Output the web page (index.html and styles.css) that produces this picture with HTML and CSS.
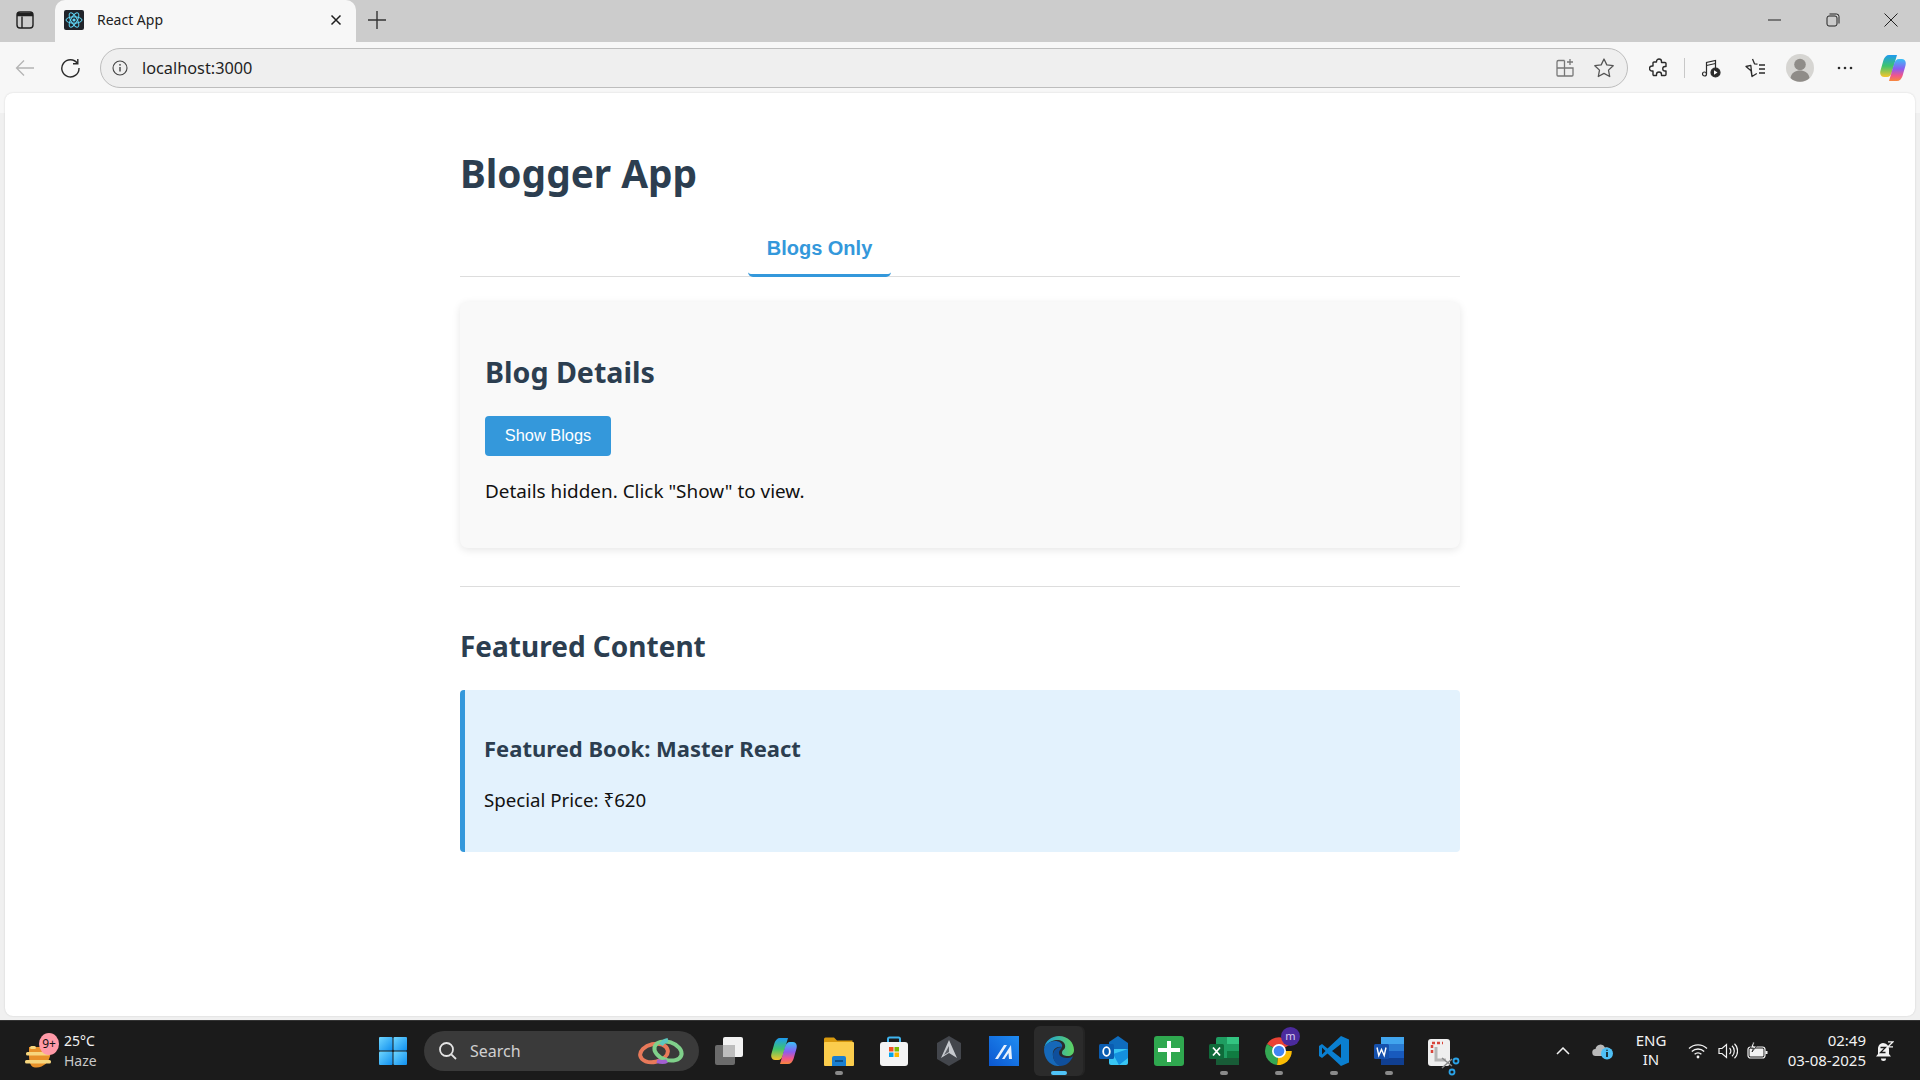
FILE: index.html
```html
<!DOCTYPE html>
<html lang="en">

<head>
    <meta charset="UTF-8">
    <meta name="viewport" content="width=device-width, initial-scale=1.0">
    <title>React App</title>
    <link rel="stylesheet" href="styles.css">
</head>

<body>
    <div class="window">
        <!-- tab strip -->
        <div class="tabstrip">
            <div class="strip-btn">
                <svg width="20" height="20" viewBox="0 0 20 20" fill="none" stroke="#1f1f1f" stroke-width="1.4"><rect x="2" y="2" width="16" height="16" rx="3"/><path d="M2 4.500h16" stroke-width="3.500"/><path d="M7 6.500V18"/></svg>
            </div>
            <div class="tab">
                <svg class="favicon" width="20" height="20" viewBox="0 0 20 20" fill="none" stroke="#61dafb" stroke-width="1"><rect width="20" height="20" rx="2" fill="#20232a" stroke="none"/><ellipse cx="10" cy="10" rx="8" ry="3.2"/><ellipse cx="10" cy="10" rx="8" ry="3.2" transform="rotate(60 10 10)"/><ellipse cx="10" cy="10" rx="8" ry="3.2" transform="rotate(120 10 10)"/><circle cx="10" cy="10" r="1.6" fill="#61dafb" stroke="none"/></svg>
                <span class="tab-title">React App</span>
                <svg class="tab-close" width="12" height="12" viewBox="0 0 12 12" stroke="#1f1f1f" stroke-width="1.5"><path d="M1.500 1.500l9 9M10.500 1.500l-9 9"/></svg>
            </div>
            <svg class="new-tab" width="18" height="18" viewBox="0 0 18 18" stroke="#333" stroke-width="1.4"><path d="M9 0v18M0 9h18"/></svg>
            <div class="win-controls">
                <svg width="14" height="14" viewBox="0 0 14 14" stroke="#222" stroke-width="1"><path d="M0 7h13"/></svg>
                <svg width="14" height="14" viewBox="0 0 14 14" fill="none" stroke="#222" stroke-width="1"><rect x="1" y="3" width="10" height="10" rx="2"/><path d="M3.500 1h7a2.500 2.500 0 0 1 2.500 2.500v7"/></svg>
                <svg width="14" height="14" viewBox="0 0 14 14" stroke="#222" stroke-width="1"><path d="M.5.500l13 13M13.500.500l-13 13"/></svg>
            </div>
        </div>

        <!-- address bar -->
        <div class="toolbar">
            <div class="tool tool-back">
                <svg width="20" height="18" viewBox="0 0 20 18" fill="none" stroke="#b4b4b4" stroke-width="1.3"><path d="M19 9H1.500M9 1.500L1.500 9 9 16.500"/></svg>
            </div>
            <div class="tool">
                <svg width="20" height="20" viewBox="0 0 20 20" fill="none" stroke="#2b2b2b" stroke-width="1.400"><path d="M17.500 5.500A8.600 8.600 0 1 0 19 10"/><path d="M17.800 1v4.800H13"/></svg>
            </div>
            <div class="addressbar">
                <svg class="info" width="16" height="16" viewBox="0 0 16 16" fill="none" stroke="#444" stroke-width="1.100"><circle cx="8" cy="8" r="7"/><path d="M8 7v4.500" stroke-width="1.400"/><circle cx="8" cy="4.800" r=".9" fill="#444" stroke="none"/></svg>
                <span class="url">localhost:3000</span>
                <div class="address-icons">
                    <svg width="20" height="20" viewBox="0 0 20 20" fill="none" stroke="#777" stroke-width="1.300"><path d="M9.500 2.500H3.500a1.500 1.500 0 0 0-1.500 1.500v13a1 1 0 0 0 1 1H17a1 1 0 0 0 1-1V10H2M9.500 2.500V18"/><path d="M15 1v6M12 4h6"/></svg>
                    <svg width="22" height="22" viewBox="0 0 22 22" fill="none" stroke="#555" stroke-width="1.300" stroke-linejoin="round"><path d="M11 2l2.800 5.900 6.400.8-4.700 4.400 1.200 6.400L11 16.400l-5.700 3.100 1.200-6.400L1.800 8.700l6.400-.8z"/></svg>
                </div>
            </div>
            <div class="tool">
                <svg width="20" height="20" viewBox="0 0 20 20" fill="none" stroke="#2b2b2b" stroke-width="1.400" stroke-linejoin="round"><path d="M7.500 3.500a2.500 2.500 0 0 1 5 0v1h3.500a1 1 0 0 1 1 1v3h-1a2.200 2.200 0 0 0 0 4.500h1v3.500a1 1 0 0 1-1 1h-3.500v-1a2.500 2.500 0 0 0-5 0v1H5a1 1 0 0 1-1-1v-3.500H3a2.500 2.500 0 0 1 0-5h1v-3a1 1 0 0 1 1-1h2.500z"/></svg>
            </div>
            <div class="tool-sep"></div>
            <div class="tool">
                <svg width="20" height="20" viewBox="0 0 20 20" fill="none" stroke="#2b2b2b" stroke-width="1.200"><path d="M5.500 16V4.500L14.500 2.500V10"/><path d="M5.500 7.500l9-2"/><circle cx="3.500" cy="16" r="2"/><circle cx="14.500" cy="14.500" r="4.500" fill="#2b2b2b"/><path d="M13 12.300v4.400l3.500-2.200z" fill="#fff" stroke="none"/></svg>
            </div>
            <div class="tool">
                <svg width="22" height="22" viewBox="0 0 22 22" fill="none" stroke="#2b2b2b" stroke-width="1.300" stroke-linejoin="round"><path d="M8.500 2l2 4.800 3 .3M8 19.500l-1-5.800L2 9.500l4.800-1.200zM8 19.500l4.800-3"/><path d="M15 8h6M15 12h6M15 16h6"/></svg>
            </div>
            <div class="tool tool-avatar">
                <svg width="28" height="28" viewBox="0 0 28 28"><circle cx="14" cy="14" r="14" fill="#d6d5d2"/><circle cx="14" cy="10.500" r="5.800" fill="#8f8c88"/><path d="M4.500 24c1-5.500 5-7.500 9.500-7.500s8.500 2 9.500 7.500a14 14 0 0 1-19 0z" fill="#8f8c88"/></svg>
            </div>
            <div class="tool">
                <svg width="16" height="4" viewBox="0 0 16 4" fill="#2b2b2b"><circle cx="2" cy="2" r="1.300"/><circle cx="8" cy="2" r="1.300"/><circle cx="14" cy="2" r="1.300"/></svg>
            </div>
            <div class="tool tool-copilot">
                <svg width="28" height="28" viewBox="0 0 28 28"><defs><linearGradient id="cpA" x1="0" y1="0" x2="0" y2="1"><stop offset="0" stop-color="#1e9af0"/><stop offset=".5" stop-color="#3ec46d"/><stop offset="1" stop-color="#f7c52b"/></linearGradient><linearGradient id="cpB" x1="0" y1="0" x2="0" y2="1"><stop offset="0" stop-color="#39c0f7"/><stop offset=".45" stop-color="#8b5cf0"/><stop offset=".75" stop-color="#f0568c"/><stop offset="1" stop-color="#f7883b"/></linearGradient></defs><path d="M10 1h8l-5 17c-.8 3-2.500 5-5 5H5C2 23 .5 20 1.500 16.500L4.500 6C5.500 3 7.500 1 10 1z" fill="url(#cpA)"/><path d="M18 27h-8l5-17c.8-3 2.500-5 5-5h3c3 0 4.500 3 3.500 6.500L23.500 22c-1 3-3 5-5.500 5z" fill="url(#cpB)"/></svg>
            </div>
        </div>

        <!-- page -->
        <div class="viewport">
            <div class="page">
                <div class="app">
                    <h1>Blogger App</h1>
                    <div class="tabs">
                        <button class="tab-link active">Blogs Only</button>
                    </div>

                    <div class="card">
                        <h2>Blog Details</h2>
                        <button class="show-btn">Show Blogs</button>
                        <p>Details hidden. Click "Show" to view.</p>
                    </div>

                    <hr class="divider">

                    <h2 class="featured-title">Featured Content</h2>
                    <div class="featured">
                        <h3>Featured Book: Master React</h3>
                        <p>Special Price: ₹620</p>
                    </div>
                </div>
            </div>
        </div>

        <!-- taskbar -->
        <div class="taskbar">
            <div class="weather">
                <div class="weather-icon">
                    <svg width="34" height="36" viewBox="0 0 34 36"><path d="M8 34a13 13 0 0 0 15-6c3-5 3-10 1-14H4v8c0 6 1 10 4 12z" fill="#e8912a"/><rect x="1" y="19" width="24" height="3.500" rx="1.500" fill="#f7d67e"/><rect x="0" y="27" width="26" height="3.500" rx="1.500" fill="#f7d67e"/><rect x="5" y="13" width="6" height="3" rx="1.500" fill="#f7d67e"/></svg>
                    <span class="badge">9+</span>
                </div>
                <div class="weather-text">
                    <span>25°C</span>
                    <span class="dim">Haze</span>
                </div>
            </div>

            <div class="task-cell">
                <svg width="30" height="30" viewBox="0 0 30 30"><defs><linearGradient id="winA" x1="0" y1="0" x2="1" y2="1"><stop offset="0" stop-color="#6fd6ff"/><stop offset="1" stop-color="#0f8fef"/></linearGradient></defs><rect x="1" y="1" width="13.500" height="13.500" rx="1" fill="url(#winA)"/><rect x="15.500" y="1" width="13.500" height="13.500" rx="1" fill="url(#winA)"/><rect x="1" y="15.500" width="13.500" height="13.500" rx="1" fill="url(#winA)"/><rect x="15.500" y="15.500" width="13.500" height="13.500" rx="1" fill="url(#winA)"/></svg>
            </div>

            <div class="search">
                <svg width="20" height="20" viewBox="0 0 20 20" fill="none" stroke="#e4e4e4" stroke-width="1.800"><circle cx="8.500" cy="8.500" r="6.500"/><path d="M13.300 13.300L18 18"/></svg>
                <span class="search-label">Search</span>
                <svg class="search-art" width="48" height="28" viewBox="0 0 48 28" fill="none" stroke-width="4"><ellipse cx="17" cy="16" rx="14" ry="9" stroke="#e8795a" transform="rotate(-12 17 16)"/><ellipse cx="31" cy="14" rx="14" ry="9" stroke="#7fd08a" transform="rotate(18 31 14)"/><path d="M20 24q6 2 10 0" stroke="#a25fd0"/><path d="M24 8q2-4 7-5" stroke="#5cc7c0"/></svg>
            </div>

            <div class="task-icons">
                <div class="task-cell">
                    <svg width="30" height="30" viewBox="0 0 30 30"><rect x="1" y="9" width="20" height="20" rx="2" fill="#6b6b6b"/><rect x="9" y="1" width="20" height="20" rx="2" fill="#f2f2f2"/><rect x="9" y="9" width="12" height="12" fill="#bdbdbd"/></svg>
                </div>
                <div class="task-cell">
                    <svg width="28" height="28" viewBox="0 0 28 28"><path d="M10 1h8l-5 17c-.8 3-2.500 5-5 5H5C2 23 .5 20 1.500 16.500L4.500 6C5.500 3 7.500 1 10 1z" fill="url(#cpA)"/><path d="M18 27h-8l5-17c.8-3 2.500-5 5-5h3c3 0 4.500 3 3.500 6.500L23.500 22c-1 3-3 5-5.500 5z" fill="url(#cpB)"/></svg>
                </div>
                <div class="task-cell running">
                    <svg width="32" height="30" viewBox="0 0 32 30"><path d="M1 3a1.500 1.500 0 0 1 1.500-1.500H11l3 3h15.500V12H1z" fill="#d99a0e"/><rect x="1" y="6" width="30" height="24" rx="1" fill="#fbcd4d"/><path d="M11 20h10a2 2 0 0 1 2 2v8H9v-8a2 2 0 0 1 2-2z" fill="#1a7fd0"/><rect x="12" y="24" width="8" height="2" fill="#0c4f88"/></svg>
                </div>
                <div class="task-cell">
                    <svg width="30" height="30" viewBox="0 0 30 30"><path d="M9 8V3a1.500 1.500 0 0 1 1.500-1.500h9A1.500 1.500 0 0 1 21 3v5" fill="none" stroke="#3fb4ee" stroke-width="2"/><rect x="1" y="6" width="28" height="24" rx="3" fill="#f4f4f4"/><rect x="10" y="11" width="4.500" height="4.500" fill="#f25022"/><rect x="15.500" y="11" width="4.500" height="4.500" fill="#7fba00"/><rect x="10" y="16.500" width="4.500" height="4.500" fill="#00a4ef"/><rect x="15.500" y="16.500" width="4.500" height="4.500" fill="#ffb900"/></svg>
                </div>
                <div class="task-cell">
                    <svg width="26" height="30" viewBox="0 0 26 30"><path d="M13 0l12 7v16l-12 7L1 23V7z" fill="#43464c"/><path d="M13 4l8 18-8-5-8 5z" fill="#c6c9ce"/><path d="M13 10l-5 9 5-3z" fill="#5d6066"/></svg>
                </div>
                <div class="task-cell">
                    <svg width="30" height="30" viewBox="0 0 30 30"><defs><linearGradient id="mA" x1="0" y1="1" x2="1" y2="0"><stop offset="0" stop-color="#0b57d0"/><stop offset="1" stop-color="#1f8cf2"/></linearGradient></defs><rect width="30" height="30" fill="url(#mA)"/><path d="M6 23L15 9h3l-9 14zM13 23l9-14 1 14h-3l-.5-6-4 6z" fill="#fff" opacity=".9"/></svg>
                </div>
                <div class="task-cell active-app">
                    <svg width="30" height="30" viewBox="0 0 30 30"><defs><linearGradient id="edA" x1="0" y1="0" x2="1" y2="0"><stop offset="0" stop-color="#1b9de2"/><stop offset="1" stop-color="#5fd35f"/></linearGradient></defs><path d="M15 0C24 0 30 6.500 30 14c0 4-3 6-6 6-3.500 0-6-1-6-3 0-4 4-3 3-8C20 5 16 3.500 12 4 5.500 5 1 9 0 13 1 5 7.500 0 15 0z" fill="url(#edA)"/><path d="M0 13c1-5 6-8 11-8 5 0 8 3 7 6-6-1-10 3-9 9 .5 4 3 8 8 10C7 31 0 24 0 13z" fill="#1668b8"/><path d="M9 19c0-5 4-8 9-8-1 3-3 3-3 6 0 4 5 5 9 5 2 0 4-1 5-2-2 6-7 10-13 10-4-2-7-6-7-11z" fill="#0f4f9c"/></svg>
                </div>
                <div class="task-cell">
                    <svg width="30" height="30" viewBox="0 0 30 30"><path d="M10 6l9-6 10 7v6H10z" fill="#0f6cbd"/><path d="M10 13h19v14a2 2 0 0 1-2 2H12a2 2 0 0 1-2-2z" fill="#38c6f4"/><path d="M14 18l15-5v9l-9 7z" fill="#1490df"/><rect x="0" y="8" width="15" height="15" rx="1.500" fill="#0a5cb0"/><ellipse cx="7.500" cy="15.500" rx="3.300" ry="4.300" fill="none" stroke="#fff" stroke-width="1.800"/></svg>
                </div>
                <div class="task-cell">
                    <svg width="30" height="30" viewBox="0 0 30 30"><rect width="30" height="30" rx="3" fill="#2fa84f"/><path d="M13 5h4v7h9v4h-9v10h-4V16H4v-4h9z" fill="#fff"/></svg>
                </div>
                <div class="task-cell running">
                    <svg width="30" height="30" viewBox="0 0 30 30"><rect x="7" y="1" width="23" height="28" rx="2" fill="#1f9d61"/><rect x="18" y="1" width="12" height="7" fill="#33c481"/><rect x="18" y="15" width="12" height="7" fill="#107c41"/><rect x="7" y="22" width="23" height="7" fill="#185c37"/><rect x="0" y="8" width="15" height="15" rx="1.500" fill="#0f6b3a"/><path d="M4 11.500l7 8M11 11.500l-7 8" stroke="#fff" stroke-width="1.800"/></svg>
                </div>
                <div class="task-cell running chrome-cell">
                    <svg width="30" height="30" viewBox="0 0 30 30"><path d="M15 15L3 8A14 14 0 0 1 27 8z" fill="#ea4335"/><path d="M15 15L3 8a14 14 0 0 0 10 21z" fill="#34a853"/><path d="M15 15h12.800A14 14 0 0 1 13 29z" fill="#fbbc04"/><circle cx="15" cy="15" r="7" fill="#fff"/><circle cx="15" cy="15" r="5.300" fill="#4285f4"/></svg>
                    <span class="profile-dot">m</span>
                </div>
                <div class="task-cell running">
                    <svg width="30" height="30" viewBox="0 0 30 30"><path d="M22 0l8 3.500v23L22 30 8.500 17.500 3 22 0 20v-10l3-2 5.500 4.500z" fill="#0a7fd0"/><path d="M22 8v14l-9-7z" fill="#1b1b1b"/><path d="M3 11.500v7l3.500-3.500z" fill="#1b1b1b"/></svg>
                </div>
                <div class="task-cell running">
                    <svg width="30" height="30" viewBox="0 0 30 30"><rect x="7" y="1" width="23" height="28" rx="2" fill="#2b7cd3"/><rect x="7" y="1" width="23" height="7" fill="#41a5ee"/><rect x="7" y="15" width="23" height="7" fill="#185abd"/><rect x="7" y="22" width="23" height="7" fill="#103f91"/><rect x="0" y="8" width="15" height="15" rx="1.500" fill="#1550ac"/><path d="M3 11.500l1.800 8 2.700-6 2.700 6 1.800-8" fill="none" stroke="#fff" stroke-width="1.400"/></svg>
                </div>
                <div class="task-cell snip">
                    <svg width="32" height="40" viewBox="0 0 32 40"><rect x="0" y="3" width="22" height="27" rx="3" fill="#efefef"/><path d="M4 17V7h11" fill="none" stroke="#d8443a" stroke-width="2.500" stroke-dasharray="3 2"/><path d="M8 11v13h10" fill="none" stroke="#b5b5b5" stroke-width="3"/><path d="M14 22l10 8M14 32l10-9" stroke="#8a8a8a" stroke-width="1.500"/><circle cx="28" cy="25" r="2.500" fill="none" stroke="#2aa3e8" stroke-width="1.800"/><circle cx="24" cy="36" r="2.500" fill="none" stroke="#2aa3e8" stroke-width="1.800"/></svg>
                </div>
            </div>

            <div class="tray">
                <div class="tray-cell tray-caret">
                    <svg width="14" height="8" viewBox="0 0 14 8" fill="none" stroke="#f2f2f2" stroke-width="1.500"><path d="M1 7l6-6 6 6"/></svg>
                </div>
                <div class="tray-cell tray-cloud">
                    <svg width="22" height="18" viewBox="0 0 22 18"><path d="M4 14a3.500 3.500 0 0 1-.5-7A5 5 0 0 1 13 5.500a4 4 0 0 1 3 8.500z" fill="#b9b9b9"/><circle cx="15" cy="11.500" r="6" fill="#4fc0f5"/><path d="M15 10v5M15 7.800v1" stroke="#111" stroke-width="1.600"/></svg>
                </div>
                <div class="tray-lang">
                    <span>ENG</span>
                    <span>IN</span>
                </div>
                <div class="tray-cell">
                    <svg width="20" height="16" viewBox="0 0 20 16" fill="none" stroke="#f2f2f2" stroke-width="1.300"><path d="M1 5.500a13 13 0 0 1 18 0M3.800 8.500a9 9 0 0 1 12.400 0M6.600 11.300a5 5 0 0 1 6.800 0"/><circle cx="10" cy="14" r="1.400" fill="#f2f2f2" stroke="none"/></svg>
                </div>
                <div class="tray-cell">
                    <svg width="20" height="18" viewBox="0 0 20 18" fill="none" stroke="#f2f2f2" stroke-width="1.200"><path d="M1 6.500v5h3l4.500 4V2.500L4 6.500z"/><path d="M11.500 6a4 4 0 0 1 0 6M14 3.800a7 7 0 0 1 0 10.400M16.500 1.800a10 10 0 0 1 0 14.400"/></svg>
                </div>
                <div class="tray-cell">
                    <svg width="22" height="18" viewBox="0 0 22 18" fill="none" stroke="#f2f2f2" stroke-width="1.200"><rect x="1" y="5" width="17" height="11" rx="2.500"/><rect x="2.500" y="6.500" width="14" height="8" rx="1" fill="#f2f2f2" stroke="none"/><path d="M19.500 9v3" stroke-width="2"/><path d="M6 0L3.500 6h3L5 10l4.500-6h-3l1-4z" fill="#f2f2f2" stroke="#1b1b1b" stroke-width=".8"/></svg>
                </div>
                <div class="clock">
                    <span>02:49</span>
                    <span>03-08-2025</span>
                </div>
                <div class="tray-cell tray-bell">
                    <svg width="18" height="20" viewBox="0 0 18 20"><path d="M7 2a6 6 0 0 1 6 6v5l2 2.500H0L2 13V7a6 6 0 0 1 5-5z" fill="#f2f2f2"/><path d="M5 17.500h5a2.500 2.500 0 0 1-5 0z" fill="#f2f2f2"/><path d="M4.500 6.500h5l-5 5h5" fill="none" stroke="#1b1b1b" stroke-width="1.300"/><path d="M12 .800h5l-5 5h5" fill="none" stroke="#f2f2f2" stroke-width="1.300"/></svg>
                </div>
            </div>
        </div>
    </div>
</body>

</html>
```

FILE: styles.css
```css
* {
    box-sizing: border-box;
}

html,
body {
    margin: 0;
    height: 100%;
    overflow: hidden;
}

body {
    font-family: "Noto Sans", "Open Sans", sans-serif;
    color: #111;
}

svg {
    display: block;
    flex: none;
}

.window {
    display: flex;
    flex-direction: column;
    height: 1080px;
}

/* tab strip */
.tabstrip {
    display: flex;
    align-items: center;
    height: 42px;
    padding-bottom: 2px;
    background-color: #cccccc;
    flex: none;
}

.strip-btn {
    display: flex;
    align-items: center;
    justify-content: center;
    width: 55px;
    height: 40px;
    padding-right: 6px;
}

.tab {
    display: flex;
    align-items: center;
    align-self: flex-start;
    width: 301px;
    height: 42px;
    padding: 0 14px 2px 9px;
    background-color: #f7f7f7;
    border-radius: 10px 10px 0 0;
}

.favicon {
    margin-right: 13px;
}

.tab-title {
    flex: 1;
    margin-bottom: 2px;
    font-size: 14px;
    color: #222;
}

.new-tab {
    margin-left: 12px;
}

.win-controls {
    display: flex;
    align-items: center;
    gap: 44px;
    margin-left: auto;
    padding-right: 22px;
}

/* address bar */
.toolbar {
    display: flex;
    align-items: center;
    height: 51px;
    padding-right: 4px;
    background-color: #f7f7f7;
    flex: none;
}

.tool {
    display: flex;
    align-items: center;
    justify-content: center;
    width: 44px;
    height: 40px;
}

.tool-back {
    width: 48px;
    padding-left: 2px;
}

.tool-avatar {
    width: 46px;
}

.tool-copilot {
    width: 46px;
    margin-left: 3px;
}

.tool-sep {
    width: 1px;
    height: 20px;
    margin: 0 4px 0 3px;
    background-color: #c8c8c8;
}

.addressbar {
    display: flex;
    align-items: center;
    flex: 1;
    height: 40px;
    margin: 0 9px 0 8px;
    padding: 0 6px 0 11px;
    background-color: #efefef;
    border: 1px solid #bdbdbd;
    border-radius: 20px;
}

.info {
    margin-right: 14px;
}

.url {
    flex: 1;
    font-size: 16.300px;
    color: #1f1f1f;
}

.address-icons {
    display: flex;
    align-items: center;
    gap: 18px;
    padding-right: 6px;
}

/* page area */
.viewport {
    flex: 1;
    padding: 0 5px 4px;
    background-color: #f0f0f0;
    background-image: linear-gradient(#f7f7f7, #f7f7f7 20px, #f0f0f0 20px);
    min-height: 0;
}

.page {
    height: 100%;
    background-color: #fff;
    border-radius: 8px;
    box-shadow: 0 0 2px rgba(0, 0, 0, 0.15);
}

.app {
    width: 1000px;
    margin: 0 auto;
    padding-top: 50px;
}

h1 {
    margin: 0 0 20px;
    font-size: 38.800px;
    line-height: 60px;
    font-weight: 700;
    color: #2c3e50;
}

.tabs {
    display: flex;
    height: 54px;
    padding-left: 288px;
    border-bottom: 1px solid #ddd;
}

.tab-link {
    width: 143px;
    height: 54px;
    padding: 0;
    font-family: "Liberation Sans", Arial, sans-serif;
    font-size: 20px;
    font-weight: 700;
    color: #3498db;
    background: none;
    border: 0;
    border-bottom: 3px solid #3498db;
    border-radius: 0 0 5px 5px;
}

.card {
    height: 246px;
    margin-top: 25px;
    padding: 50px 25px 0;
    background-color: #f9f9f9;
    border-radius: 8px;
    box-shadow: 0 2px 8px rgba(0, 0, 0, 0.1);
}

h2 {
    margin: 0;
    font-size: 28.600px;
    line-height: 40px;
    font-weight: 700;
    color: #2c3e50;
}

.show-btn {
    display: block;
    width: 126px;
    height: 40px;
    margin-top: 24px;
    padding: 0 0 2px;
    font-family: "Liberation Sans", Arial, sans-serif;
    font-size: 16.400px;
    color: #fff;
    background-color: #3498db;
    border: 0;
    border-radius: 4px;
}

.card p {
    margin: 20px 0 0;
    font-size: 18.900px;
    line-height: 30px;
}

.divider {
    height: 1px;
    margin: 38px 0 0;
    background-color: #ddd;
    border: 0;
}

.featured-title {
    margin-top: 39px;
    font-size: 28px;
}

.featured {
    height: 162px;
    margin-top: 24px;
    padding: 42px 19px 0;
    background-color: #e3f2fd;
    border-left: 5px solid #3498db;
    border-radius: 4px;
}

h3 {
    margin: 0;
    font-size: 22px;
    line-height: 32px;
    font-weight: 700;
    color: #2c3e50;
}

.featured p {
    margin: 21px 0 0;
    font-size: 18.700px;
    line-height: 30px;
}

/* taskbar */
.taskbar {
    display: flex;
    align-items: center;
    height: 60px;
    background-color: #1b1b1b;
    border-top: 1px solid #333;
    flex: none;
    color: #f2f2f2;
}

.weather {
    display: flex;
    align-items: center;
    width: 365px;
    padding-left: 25px;
}

.weather-icon {
    position: relative;
    width: 39px;
    height: 36px;
}

.badge {
    position: absolute;
    top: 0;
    left: 14px;
    width: 20px;
    height: 22px;
    font-size: 12px;
    line-height: 22px;
    text-align: center;
    color: #111;
    background-color: #ff9aa8;
    border-radius: 50%;
}

.weather-text {
    display: flex;
    flex-direction: column;
    font-size: 14px;
    line-height: 20px;
}

.dim {
    color: #c8c8c8;
}

.task-cell {
    position: relative;
    display: flex;
    align-items: center;
    justify-content: center;
    width: 55px;
    height: 50px;
}

.running::after,
.active-app::after {
    content: "";
    position: absolute;
    bottom: 1px;
    left: 50%;
    width: 8px;
    height: 4px;
    margin-left: -4px;
    background-color: #8a8a8a;
    border-radius: 2px;
}

.active-app::before {
    content: "";
    position: absolute;
    top: 0;
    bottom: 0;
    left: 3px;
    right: 3px;
    background-color: #2b2b2b;
    border-radius: 6px;
    box-shadow: 2px 0 0 #242424;
}

.active-app svg {
    position: relative;
}

.active-app::after {
    width: 16px;
    margin-left: -8px;
    background-color: #4fc3f7;
}

.snip svg {
    margin-top: 10px;
}

.profile-dot {
    position: absolute;
    top: 1px;
    right: 6px;
    width: 19px;
    height: 19px;
    font-size: 11px;
    line-height: 17px;
    text-align: center;
    color: #d8cdf0;
    background-color: #4b2a9c;
    border-radius: 50%;
}

.search {
    display: flex;
    align-items: center;
    width: 275px;
    height: 40px;
    margin: 0 2px 0 4px;
    padding: 0 14px 0 14px;
    background-color: #3a3a3a;
    border-radius: 20px;
}

.search-label {
    flex: 1;
    margin-left: 12px;
    font-size: 16px;
    color: #d0d0d0;
}

.task-icons {
    display: flex;
    align-items: center;
}

.tray {
    display: flex;
    align-items: center;
    margin-left: auto;
    padding-right: 16px;
}

.tray-cell {
    display: flex;
    align-items: center;
    justify-content: center;
    width: 30px;
    height: 40px;
}

.tray-caret,
.tray-cloud {
    width: 40px;
}

.tray-bell {
    width: 38px;
}

.tray-lang {
    display: flex;
    flex-direction: column;
    align-items: center;
    width: 56px;
    margin: 0 4px 1px 0;
    font-size: 15px;
    line-height: 19px;
}

.clock {
    display: flex;
    flex-direction: column;
    align-items: flex-end;
    width: 93px;
    margin-bottom: 2px;
    font-size: 15px;
    line-height: 20px;
}
```
